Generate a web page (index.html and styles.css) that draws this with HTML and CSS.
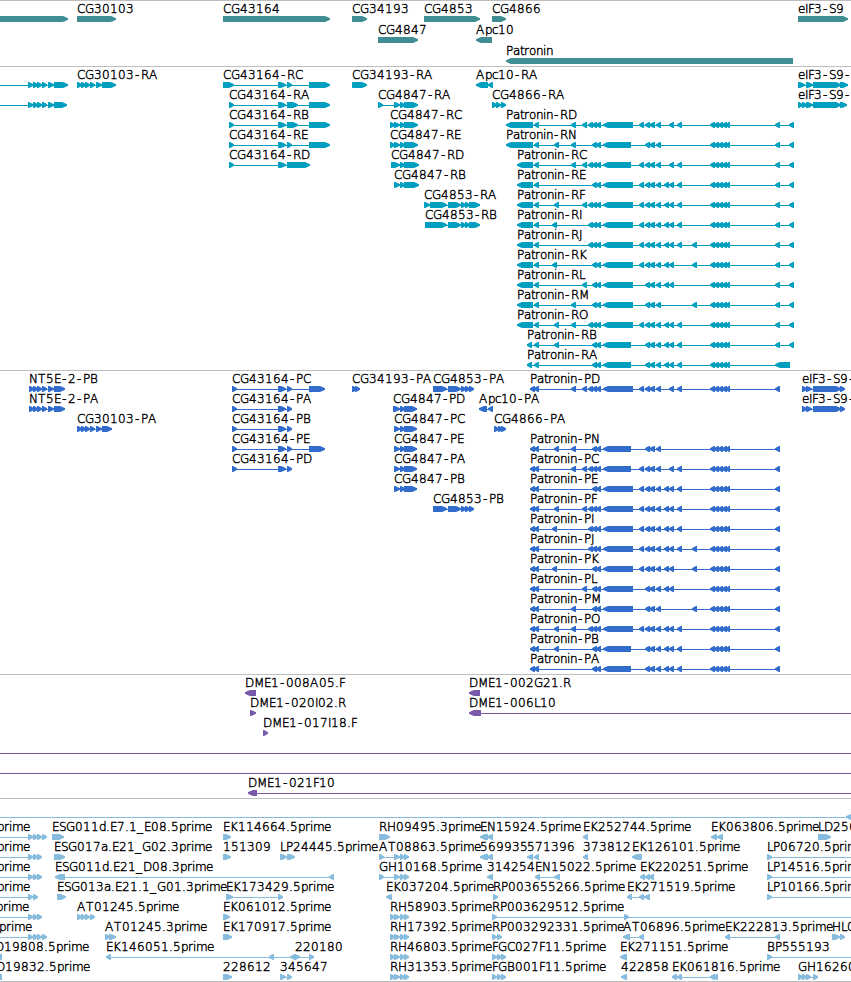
FILE: index.html
```
<!DOCTYPE html>
<html lang="en">
<head>
    <meta charset="UTF-8">
    <meta name="viewport" content="width=device-width, initial-scale=1.0">
    <title>Genome Browser</title>
    <link rel="stylesheet" href="styles.css">
</head>
<body>
    <main class="browser">
        <section class="track track-gene"><svg id="genes" width="851" height="65"></svg></section>
        <section class="track track-mrna"><svg id="mrna" width="851" height="303"></svg></section>
        <section class="track track-cds"><svg id="cds" width="851" height="303"></svg></section>
        <section class="track track-bac"><svg id="bac" width="851" height="123"></svg></section>
        <section class="track track-est"><svg id="est" width="851" height="182"></svg></section>
    </main>
    <script src="tracks.js"></script>
</body>
</html>
```
FILE: styles.css
```
body {
    margin: 0;
    background: #fff;
    font-family: 'DejaVu Sans', sans-serif;
    font-size: 12px;
    font-weight: 200;
    overflow: hidden;
}
.browser {
    display: flex;
    flex-direction: column;
    width: 851px;
    border-bottom: 1px solid #bebebe;
}
.track {
    border-top: 1px solid #bebebe;
}
.track svg {
    display: block;
    overflow: hidden;
}
.track text {
    fill: #000;
    stroke: #000;
    stroke-width: 0.42px;
}
.intron {
    shape-rendering: crispEdges;
}
.track-gene {
    color: #408e93;
}
.track-mrna {
    color: #009ebf;
}
.track-cds {
    color: #316ccc;
}
.track-bac {
    color: #785aa8;
}
.track-est {
    color: #87bcde;
}
.exon,
.intron {
    fill: currentColor;
}
```
FILE: tracks.js
```
const SVG_NS = 'http://www.w3.org/2000/svg';

// label advance widths in pixels, digits are all 8
const ADVANCE = {
    A: 9, B: 8, C: 8, D: 9, E: 7, F: 6, G: 9, H: 9, I: 3, K: 8, L: 6, M: 10, N: 9,
    P: 7, R: 8, S: 7, T: 8, J: 4, O: 10, a: 7, c: 6, d: 7, e: 7, i: 3, m: 11,
    n: 7, o: 7, p: 7, r: 5, t: 4, '-': 7, '.': 4, _: 7
};

function add(svg, tag, attrs) {
    const el = document.createElementNS(SVG_NS, tag);
    for (const key in attrs) el.setAttribute(key, attrs[key]);
    svg.appendChild(el);
    return el;
}

// "10-20 30" -> [[10, 20], [30, 35]]
function parseExons(str) {
    return str.split(' ').filter(Boolean).map(part => {
        const m = part.match(/^(-?\d+)(?:-(\d+))?$/);
        return [+m[1], m[2] ? +m[2] : +m[1] + 5];
    });
}

function drawExon(svg, a, b, y, dir) {
    const head = Math.min(b - a, 6) - 1;
    const tip = dir === '>' ? b : a;
    const base = dir === '>' ? a : b;
    const neck = dir === '>' ? b - head : a + head;
    const knee = dir === '>' ? b - head * 0.5 : a + head * 0.5;
    add(svg, 'polygon', {
        class: 'exon',
        points: `${base},${y} ${neck},${y} ${knee},${y + 1} ${tip},${y + 2.2} ${tip},${y + 3.8} ${knee},${y + 5} ${neck},${y + 6} ${base},${y + 6}`
    });
}

function drawLabel(svg, label, x, y) {
    const xs = [];
    for (const ch of label) {
        xs.push(ch === '-' ? x + 1 : x);
        x += ADVANCE[ch] || 8;
    }
    add(svg, 'text', { x: xs.join(' '), y: y }).textContent = label;
}

// feature: [row, strand, label, exons, { x, from, to }]
function drawTrack(id, features, pitch) {
    const svg = document.getElementById(id);
    for (const [row, dir, label, exonStr, opt = {}] of features) {
        const y = 15 + row * pitch;
        const exons = parseExons(exonStr);
        const from = opt.from ?? exons[0][0];
        const to = opt.to ?? exons[exons.length - 1][1];
        if (exons.length !== 1 || opt.from !== undefined || opt.to !== undefined) {
            add(svg, 'rect', { class: 'intron', x: from, y: y + 3, width: to - from, height: 1 });
        }
        exons.forEach(([a, b]) => drawExon(svg, a, b, y, dir));
        if (label) drawLabel(svg, label, opt.x ?? exons[0][0], y - 3);
    }
}

const GENES = [
    [0, '>', '', '-10-68'],
    [0, '>', 'CG30103', '77-116'],
    [0, '>', 'CG43164', '223-330'],
    [0, '>', 'CG34193', '352-367'],
    [0, '>', 'CG4853', '424-480'],
    [0, '>', 'CG4866', '492-506'],
    [0, '>', 'eIF3-S9', '798-848'],
    [1, '>', 'CG4847', '378-418'],
    [1, '<', 'Apc10', '476-492'],
    [2, '<', 'Patronin', '506-793']
];

// middle part of each Patronin isoform, shared by mRNA and CDS tracks
const CLUSTER = '710 714 718 722 726-730';
const PATRONIN = {
    D: '571 582 588 592 596 603-633 639 645 649-655 656 669 677',
    N: '554 571 592 596 603-631 645 649-655 656',
    C: '571 582 588 592 596 603-631 639 645 649-655 656 669 677',
    E: '592 596 603-633 639 645 649-655 656 664 669 677',
    F: '554 582 588 592 596 603-633 639 645 649-655 656 664 669 677',
    I: '552 588 592 596 603-633 639 645 649-655 656 664 669 677',
    J: '588 592 596 603-633 639 645 649-655 656 664 669 677 692',
    K: '552 592 596 603-633 639 645 649-655 656 664 669 692',
    L: '582 592 596 603-633 645 649-655 656 664 669',
    M: '571 592 596 603-633 645 649-655 656 692',
    O: '554 571 588 592 596 603-633 639 645 649-655 656 664 669 677',
    B: '554 592 596 603-631 645 649-655 656 664 669 677',
    A: '592 596 603-631 645 649-655 656 664 669 677'
};

const MRNA = [
    [0, '>', '', '28 33 37 42 48-54 54-68', { from: 0 }],
    [1, '>', '', '28 33 37 42 48-54 54-67', { from: 0 }],
    [0, '>', 'CG30103-RA', '77 81 85 90 96-102 102-116'],
    [0, '>', 'CG43164-RC', '223-234 278-286 287 309-330'],
    [1, '>', 'CG43164-RA', '229 278-286 287-298 309-330'],
    [2, '>', 'CG43164-RB', '229 278-286 287-298 309-330'],
    [3, '>', 'CG43164-RE', '229 278-286 287 309-330'],
    [4, '>', 'CG43164-RD', '229 278-286 287-310'],
    [0, '>', 'CG34193-RA', '352-356 354-367'],
    [1, '>', 'CG4847-RA', '378 394-400 400 404-418'],
    [2, '>', 'CG4847-RC', '390 394-400 400 404-418'],
    [3, '>', 'CG4847-RE', '390 394-400 400 404-418'],
    [4, '>', 'CG4847-RD', '391-400 400 404-419'],
    [5, '>', 'CG4847-RB', '394-400 400 404-419'],
    [6, '>', 'CG4853-RA', '424-430 430-447 448-461 461 465 469-480'],
    [7, '>', 'CG4853-RB', '425-447 448-461 461 465 469-480'],
    [0, '<', 'Apc10-RA', '476-488 488-493'],
    [1, '>', 'CG4866-RA', '492 496 501'],
    [0, '>', 'eIF3-S9-', '798-805 806-813 813-841 840-848'],
    [1, '>', 'eIF3-S9-', '798 802 806-813 813-841 840-847']
];

const CDS = [
    [0, '>', 'NT5E-2-PB', '29 33 37 42 48-54 54-65'],
    [1, '>', 'NT5E-2-PA', '29 33 37 42 48-54 54-65'],
    [2, '>', 'CG30103-PA', '77 81 85 90 96-102 102-112'],
    [0, '>', 'CG43164-PC', '232 278-286 287 309-325'],
    [1, '>', 'CG43164-PA', '232 278-286 287'],
    [2, '>', 'CG43164-PB', '232 278-286 287'],
    [3, '>', 'CG43164-PE', '232 278-286 287 309-325'],
    [4, '>', 'CG43164-PD', '232 278-286 287'],
    [0, '>', 'CG34193-PA', '352 355'],
    [0, '>', 'CG4853-PA', '433-447 448-461 461 465 469'],
    [1, '>', 'CG4847-PD', '393-400 400 404-417'],
    [2, '>', 'CG4847-PC', '394-400 400 404-417'],
    [3, '>', 'CG4847-PE', '394-400 400 404-417'],
    [4, '>', 'CG4847-PA', '394-400 400 404-417'],
    [5, '>', 'CG4847-PB', '394-400 400 404-417'],
    [6, '>', 'CG4853-PB', '433-447 448-461 461 465 469'],
    [1, '<', 'Apc10-PA', '479-487 488'],
    [2, '>', 'CG4866-PA', '494 498 501'],
    [0, '>', 'eIF3-S9-', '802 806-812 813-841 840'],
    [1, '>', 'eIF3-S9-', '802 806-812 813-841 840']
];

Object.keys(PATRONIN).forEach((iso, i) => {
    let start = '517-533';
    if (i < 2) start = '506-533';
    if (i > 10) start = '527';
    const end = iso === 'A' ? '775-790' : '775 789';
    MRNA.push([i + 2, '<', 'Patronin-R' + iso, `${start} 534 ${PATRONIN[iso]} ${CLUSTER} ${end}`]);
    CDS.push([i ? i + 2 : 0, '<', 'Patronin-P' + iso, `530 534 ${PATRONIN[iso]} ${CLUSTER} 775`]);
});

const BAC = [
    [0, '<', 'DME1-008A05.F', '245-256'],
    [1, '>', 'DME1-020I02.R', '250-256'],
    [2, '>', 'DME1-017I18.F', '263'],
    [0, '<', 'DME1-002G21.R', '469-480'],
    [1, '<', 'DME1-006L10', '469-481', { to: 851 }],
    [3, '>', '', '', { from: 0, to: 851 }],
    [4, '>', '', '', { from: 0, to: 851 }],
    [5, '<', 'DME1-021F10', '248-257', { to: 851 }]
];

const EST = [
    [0, '<', '', '846-857', { from: 0 }],
    [1, '>', 'prime', '28 33 37 42', { from: 0, x: -3 }],
    [2, '>', 'prime', '28 33 37', { from: 0, x: -3 }],
    [3, '>', 'prime', '28 33 37', { from: 0, x: -3 }],
    [4, '>', 'prime', '28 33', { from: 0, x: -3 }],
    [5, '>', 'prime', '28 33 37', { from: 0, x: -4 }],
    [6, '>', 'prime', '28 33 37 42', { from: 0, x: -1 }],
    [7, '<', 'D19808.5prime', '-10-2', { x: -5 }],
    [8, '<', 'D19832.5prime', '-10-2', { x: -4 }],

    [1, '>', 'ESG011d.E7.1_E08.5prime', '52-64'],
    [2, '>', 'ESG017a.E21_G02.3prime', '54-65'],
    [3, '<', 'ESG011d.E21_D08.3prime', '55-65 329'],
    [4, '>', 'ESG013a.E21.1_G01.3prime', '57-66'],
    [5, '>', 'AT01245.5prime', '77 81 85 90'],
    [6, '>', 'AT01245.3prime', '105 109-116'],
    [7, '<', 'EK146051.5prime', '106 269 290-296'],

    [1, '>', 'EK114664.5prime', '223-231'],
    [2, '>', '151309', '223-231'],
    [4, '>', 'EK173429.5prime', '226-233 278'],
    [5, '>', 'EK061012.5prime', '223-230'],
    [6, '>', 'EK170917.5prime', '223-232'],
    [8, '>', '228612', '223-232'],
    [2, '>', 'LP24445.5prime', '280-287 287-295'],
    [7, '>', '220180', '294-300 309', { x: 295 }],
    [8, '>', '345647', '280-286 287'],

    [1, '>', 'RH09495.3prime', '379-390'],
    [2, '>', 'AT08863.5prime', '379 394-400 400 404'],
    [3, '>', 'GH10168.5prime', '379 394-400 400 404'],
    [4, '<', 'EK037204.5prime', '386-392'],
    [5, '>', 'RH58903.5prime', '390 394-400 400 404'],
    [6, '>', 'RH17392.5prime', '390 394-400 400 404'],
    [7, '>', 'RH46803.5prime', '390 394-400 400 404'],
    [8, '>', 'RH31353.5prime', '390 394-400 400 404'],

    [1, '<', 'EN15924.5prime', '480-488 487-493'],
    [2, '<', '569935', '480-488 487-493'],
    [3, '<', '314254', '487-493'],
    [4, '>', 'RP003655266.5prime', '493'],
    [5, '>', 'RP003629512.5prime', '492 624', { to: 851 }],
    [6, '>', 'RP003292331.5prime', '492 497'],
    [7, '>', 'FGC027F11.5prime', '492 497 501'],
    [8, '>', 'FGB001F11.5prime', '492 497 501'],
    [2, '<', '571396', '527-533 534'],
    [3, '<', 'EN15022.5prime', '535 554-560'],

    [1, '<', 'EK252744.5prime', '583'],
    [2, '<', '373812', '583'],
    [2, '<', 'EK126101.5prime', '632-642'],
    [3, '<', 'EK220251.5prime', '640 645 649'],
    [4, '<', 'EK271519.5prime', '627 639 644-650'],
    [6, '<', 'AT06896.5prime', '623-630 639'],
    [7, '<', 'EK271151.5prime', '620-627'],
    [8, '<', '422858', '621-627'],
    [8, '<', 'EK061816.5prime', '672 677 710 713'],

    [1, '<', 'EK063806.5prime', '711-717 717-723'],
    [6, '<', 'EK222813.5prime', '725 775'],
    [2, '>', 'LP06720.5prime', '767', { to: 851 }],
    [3, '>', 'LP14516.5prime', '767', { to: 851 }],
    [4, '>', 'LP10166.5prime', '767', { to: 851 }],
    [7, '>', 'BP555193', '767', { to: 851 }],
    [8, '>', 'GH16260', '798 802 806 813'],
    [1, '>', 'LD256', '818-831'],
    [6, '>', 'HL0', '832-840 840']
];

drawTrack('genes', GENES, 21);
drawTrack('mrna', MRNA, 20);
drawTrack('cds', CDS, 20);
drawTrack('bac', BAC, 20);
drawTrack('est', EST, 20);
```
